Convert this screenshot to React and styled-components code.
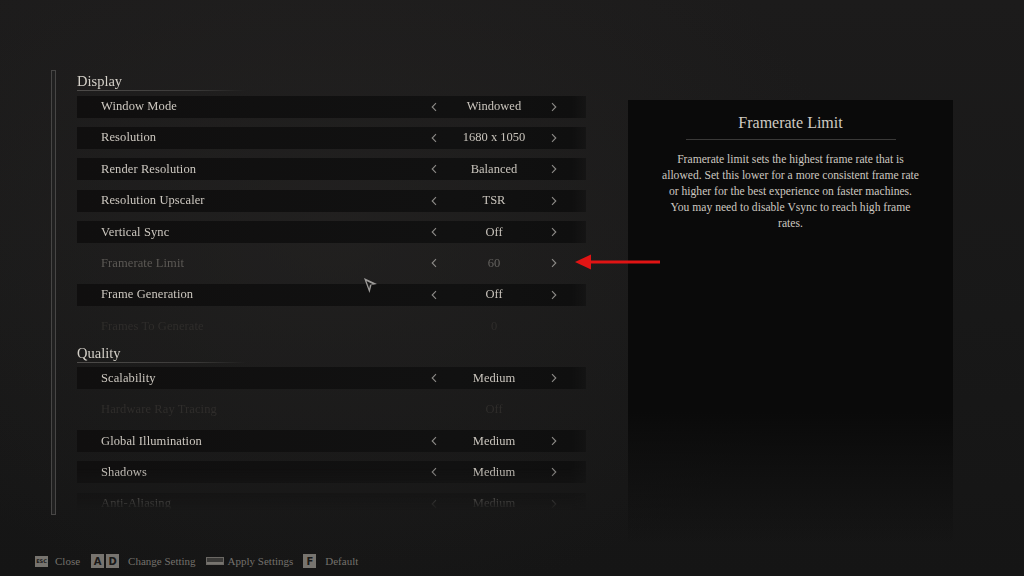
import React from 'react';
import styled, { createGlobalStyle } from 'styled-components';

const GlobalStyle = createGlobalStyle`
  html, body {
    margin: 0;
    padding: 0;
    background: #161616;
  }
  * {
    box-sizing: border-box;
  }
`;

const Screen = styled.div`
  position: relative;
  width: 1024px;
  height: 576px;
  overflow: hidden;
  display: grid;
  grid-template-rows: 1fr 30px;
  font-family: 'Liberation Serif', 'DejaVu Serif', serif;
  background:
    radial-gradient(ellipse 520px 380px at 330px 230px, rgba(40, 38, 37, 0.55), rgba(0, 0, 0, 0) 100%),
    linear-gradient(to bottom, #1c1b1b 0%, #181818 55%, #151515 100%);
`;

const Main = styled.div`
  display: flex;
  align-items: flex-start;
  padding: 70px 0 0 51px;
`;

const ScrollTrack = styled.div`
  width: 5px;
  height: 445px;
  border: 1px solid #474645;
  background: #202020;
  margin-right: 21px;
  flex-shrink: 0;
`;

const List = styled.div`
  width: 509px;
  height: 445px;
  display: flex;
  flex-direction: column;
  gap: 4.5px;
  overflow: hidden;
  -webkit-mask-image: linear-gradient(to bottom, #000 0, #000 398px, transparent 440px);
  mask-image: linear-gradient(to bottom, #000 0, #000 398px, transparent 440px);
`;

const Section = styled.section`
  display: flex;
  flex-direction: column;
`;

const SectionHeader = styled.h2`
  margin: 0 0 3.5px;
  height: 22px;
  line-height: 22px;
  font-size: 14.5px;
  font-weight: normal;
  color: #d4d0c8;
  position: relative;

  &::after {
    content: '';
    position: absolute;
    left: 0;
    bottom: 1px;
    width: 170px;
    height: 1px;
    background: linear-gradient(to right, #4e4c4a 0%, #3a3938 70%, rgba(58, 57, 56, 0) 100%);
  }
`;

const Rows = styled.div`
  display: flex;
  flex-direction: column;
  gap: 9.4px;
`;

const Row = styled.div`
  display: flex;
  align-items: center;
  height: 22px;
  padding-left: 24px;
  padding-right: 22px;
  background: ${(p) =>
    p.$plain
      ? 'transparent'
      : 'linear-gradient(to right, #100f0f 0%, #111111 75%, #0f0f0f 97%, rgba(16,16,16,0.6) 100%)'};
`;

const Label = styled.span`
  flex: 1;
  font-size: 12.5px;
  letter-spacing: 0.1px;
  color: ${(p) => (p.$tone === 'dim' ? '#5c5955' : p.$tone === 'off' ? '#2f2d2b' : '#cdc8c0')};
`;

const Control = styled.div`
  width: 140px;
  display: grid;
  grid-template-columns: 20px 1fr 20px;
  align-items: center;
  justify-items: center;
`;

const Value = styled.span`
  font-size: 12.5px;
  color: ${(p) => (p.$tone === 'dim' ? '#64625f' : p.$tone === 'off' ? '#2f2d2b' : '#c9c4bc')};
`;

const ChevronSvg = styled.svg`
  width: 6px;
  height: 10px;
  display: block;
`;

const Chevron = ({ dir, hidden }) => (
  <ChevronSvg viewBox="0 0 6 10" style={{ visibility: hidden ? 'hidden' : 'visible' }}>
    <path
      d={dir === 'left' ? 'M5 1.2 L1.2 5 L5 8.8' : 'M1 1.2 L4.8 5 L1 8.8'}
      fill="none"
      stroke="#8d8b88"
      strokeWidth="1.1"
    />
  </ChevronSvg>
);

const InfoPanel = styled.aside`
  margin-left: 42px;
  margin-top: 30px;
  width: 325px;
  height: 445px;
  padding: 13px 0 0;
  display: flex;
  flex-direction: column;
  align-items: center;
  background: linear-gradient(to bottom, #0a0a0a 0%, #0a0a0a 70%, rgba(12, 12, 12, 0.5) 88%, rgba(16, 16, 16, 0) 100%);
`;

const InfoTitle = styled.h3`
  margin: 0;
  font-size: 16px;
  font-weight: normal;
  line-height: 20px;
  color: #cfcac2;
  padding-bottom: 6px;
  width: 210px;
  text-align: center;
  border-bottom: 1px solid #3a3938;
`;

const InfoText = styled.p`
  margin: 12px 0 0;
  width: 290px;
  font-size: 11.6px;
  line-height: 16px;
  text-align: center;
  color: #cdc8c0;
`;

const Footer = styled.footer`
  display: flex;
  align-items: center;
  padding: 0 0 0 35px;
  font-size: 11px;
  color: #74716c;
`;

const Hint = styled.div`
  display: flex;
  align-items: center;
  gap: ${(p) => p.$gap}px;
  margin-right: ${(p) => p.$after}px;
`;

const Key = styled.span`
  display: inline-flex;
  align-items: center;
  justify-content: center;
  width: 13px;
  height: ${(p) => (p.$small ? 11 : 14)}px;
  background: #77746f;
  color: #1a1918;
  font-family: 'DejaVu Sans', sans-serif;
  font-size: ${(p) => (p.$small ? 5 : 10)}px;
  font-weight: bold;
`;

const Keys = styled.span`
  display: inline-flex;
  gap: 2px;
`;

const SpaceKey = styled.span`
  display: inline-block;
  width: 18px;
  height: 8px;
  border: 1px solid #6b6864;
  background: #3a3937;
  box-shadow: inset 0 -2px 0 #77746f;
`;

const Overlay = styled.svg`
  position: absolute;
  left: ${(p) => p.$x}px;
  top: ${(p) => p.$y}px;
  pointer-events: none;
`;

const display = [
  { label: 'Window Mode', value: 'Windowed' },
  { label: 'Resolution', value: '1680 x 1050' },
  { label: 'Render Resolution', value: 'Balanced' },
  { label: 'Resolution Upscaler', value: 'TSR' },
  { label: 'Vertical Sync', value: 'Off' },
  { label: 'Framerate Limit', value: '60', tone: 'dim', plain: true },
  { label: 'Frame Generation', value: 'Off' },
  { label: 'Frames To Generate', value: '0', tone: 'off', plain: true, locked: true },
];

const quality = [
  { label: 'Scalability', value: 'Medium' },
  { label: 'Hardware Ray Tracing', value: 'Off', tone: 'off', plain: true, locked: true },
  { label: 'Global Illumination', value: 'Medium' },
  { label: 'Shadows', value: 'Medium' },
  { label: 'Anti-Aliasing', value: 'Medium' },
];

const SettingRow = ({ label, value, tone, plain, locked }) => (
  <Row $plain={plain}>
    <Label $tone={tone}>{label}</Label>
    <Control>
      <Chevron dir="left" hidden={locked} />
      <Value $tone={tone}>{value}</Value>
      <Chevron dir="right" hidden={locked} />
    </Control>
  </Row>
);

const App = () => (
  <>
    <GlobalStyle />
    <Screen>
      <Main>
        <ScrollTrack />
        <List>
          <Section>
            <SectionHeader>Display</SectionHeader>
            <Rows>
              {display.map((s) => (
                <SettingRow key={s.label} {...s} />
              ))}
            </Rows>
          </Section>
          <Section>
            <SectionHeader>Quality</SectionHeader>
            <Rows>
              {quality.map((s) => (
                <SettingRow key={s.label} {...s} />
              ))}
            </Rows>
          </Section>
        </List>
        <InfoPanel>
          <InfoTitle>Framerate Limit</InfoTitle>
          <InfoText>
            Framerate limit sets the highest frame rate that is
            <br />
            allowed. Set this lower for a more consistent frame rate
            <br />
            or higher for the best experience on faster machines.
            <br />
            You may need to disable Vsync to reach high frame
            <br />
            rates.
          </InfoText>
        </InfoPanel>
      </Main>
      <Footer>
        <Hint $gap={7} $after={11}>
          <Key $small>ESC</Key>
          <span>Close</span>
        </Hint>
        <Hint $gap={9} $after={10}>
          <Keys>
            <Key>A</Key>
            <Key>D</Key>
          </Keys>
          <span>Change Setting</span>
        </Hint>
        <Hint $gap={4} $after={10}>
          <SpaceKey />
          <span>Apply Settings</span>
        </Hint>
        <Hint $gap={9} $after={0}>
          <Key>F</Key>
          <span>Default</span>
        </Hint>
      </Footer>

      <Overlay $x={573} $y={253} width="90" height="18" viewBox="0 0 90 18">
        <path d="M17 9 L87 9" stroke="#e01414" strokeWidth="3" />
        <path d="M2 9 L18 1.5 L18 16.5 Z" fill="#e01414" />
      </Overlay>

      <Overlay $x={362} $y={276} width="18" height="20" viewBox="0 0 18 20">
        <path d="M2 2 L15 8 L9.5 9 L7.5 17 Z" fill="#b5b3b0" opacity="0.85" />
        <path d="M4.5 5 L11 8.2 L8 8.8 L7.2 12.5 Z" fill="#1a1a1a" />
      </Overlay>
    </Screen>
  </>
);

export default App;
